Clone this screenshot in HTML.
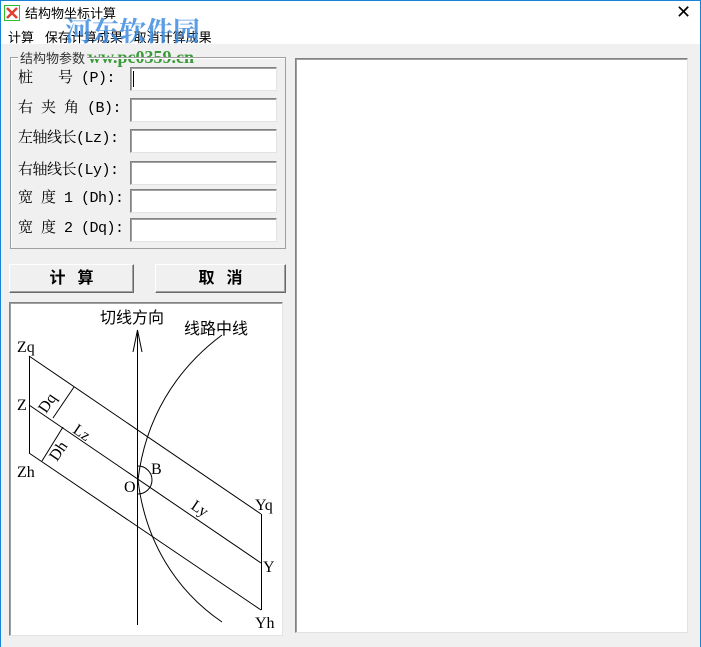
<!DOCTYPE html>
<html><head><meta charset="utf-8"><style>
*{margin:0;padding:0;box-sizing:border-box}
body{width:701px;height:647px;background:#f0f0f0;position:relative;overflow:hidden;font-family:"Liberation Sans","Noto Sans CJK SC",sans-serif;font-size:13px;color:#000}
.a{position:absolute}
.hdr{left:0;top:0;width:701px;height:44px;background:#fff}
.inp{position:absolute;left:130px;width:147px;height:24px;background:#fff;border:1px solid;border-color:#828282 #e3e3e3 #e3e3e3 #828282;box-shadow:inset 1px 1px 0 #a0a0a0}
.lab{position:absolute;left:18px;font-family:"Liberation Mono","Noto Serif CJK SC",monospace;font-size:15px;letter-spacing:-0.5px;white-space:pre;line-height:20px}
.btn{position:absolute;top:264px;height:29px;background:#f0f0f0;border:1px solid;border-color:#fff #696969 #696969 #fff;box-shadow:inset -1px -1px 0 #a0a0a0;text-align:center;line-height:27px;font-weight:bold;font-size:16px;letter-spacing:12px;padding-left:12px}
</style></head><body>
<div class="a hdr"></div>
<div class="a" style="left:0;top:0;width:701px;height:647px;border:1px solid #1883d7;border-bottom:none"></div>
<svg class="a" style="left:4px;top:5px" width="16" height="16"><rect x="0.5" y="0.5" width="15" height="15" fill="none" stroke="#2bbd2b"/><path d="M3 3L13 13M13 3L3 13" stroke="#e04030" stroke-width="2.5"/></svg>
<div class="a" style="left:25px;top:3px;font-size:13px">结构物坐标计算</div>
<div class="a" style="left:676px;top:2px;font-size:18px;font-weight:300">✕</div>
<div class="a" style="left:8px;top:27px;font-size:13px;color:#000;white-space:pre">计算   保存计算成果   取消计算成果</div>
<div class="a" style="left:65px;top:10px;font-size:27px;font-weight:bold;color:#3f8de0;opacity:.85;font-family:'Noto Serif CJK SC',serif">河东软件园</div>
<div class="a" style="left:75px;top:47px;font-size:18px;font-weight:bold;color:#3a9a3a;font-family:'Liberation Serif',serif">www.pc0359.cn</div>
<div class="a" style="left:10px;top:57px;width:276px;height:192px;border:1px solid #a0a0a0;box-shadow:1px 1px 0 #fff inset"></div>
<div class="a" style="left:18px;top:48px;background:#f0f0f0;padding:0 2px;font-size:13px;color:#333">结构物参数</div>
<div class="lab" style="top:69px">桩   号 (P):</div><div class="inp" style="top:67px"></div>
<div class="a" style="left:133px;top:71px;width:1px;height:16px;background:#000"></div>
<div class="lab" style="top:99px">右 夹 角 (B):</div><div class="inp" style="top:98px"></div>
<div class="lab" style="top:129px">左轴线长(Lz):</div><div class="inp" style="top:129px"></div>
<div class="lab" style="top:161px">右轴线长(Ly):</div><div class="inp" style="top:161px"></div>
<div class="lab" style="top:189px">宽 度 1 (Dh):</div><div class="inp" style="top:189px"></div>
<div class="lab" style="top:219px">宽 度 2 (Dq):</div><div class="inp" style="top:218px"></div>
<div class="btn" style="left:9px;width:125px">计算</div>
<div class="btn" style="left:155px;width:131px">取消</div>
<div class="a" style="left:295px;top:58px;width:393px;height:575px;background:#fff;border:1px solid;border-color:#828282 #e3e3e3 #e3e3e3 #828282;box-shadow:inset 1px 1px 0 #a0a0a0"></div>
<div class="a" style="left:9px;top:302px;width:274px;height:334px;background:#fff;border:1px solid;border-color:#828282 #e3e3e3 #e3e3e3 #828282;box-shadow:inset 1px 1px 0 #a0a0a0"></div>
<svg class="a" style="left:0;top:0" width="701" height="647" font-family="Liberation Serif,serif" font-size="16">
<g stroke="#000" stroke-width="1" fill="none">
<path d="M137.5 330V625"/>
<path d="M133 352L137.5 330L142 352M137.5 330V352"/>
<path d="M29.5 356V453M261.5 514V610"/>
<path d="M29 356L261 514M29 405L261 563M29 453L261 610"/>
<path d="M53 418L74 387M42 461L63 427"/>
<path d="M222 335C175 370 145 420 138 480C145 540 175 590 222 622"/>
<path d="M138 466A14 14 0 0 1 138 494"/>
</g>
<g font-family="Liberation Sans,Noto Sans CJK SC,sans-serif">
<text x="100" y="323">切线方向</text>
<text x="184" y="334">线路中线</text>
</g>
<text x="17" y="352">Zq</text>
<text x="17" y="410">Z</text>
<text x="17" y="477">Zh</text>
<text x="124" y="492">O</text>
<text x="151" y="474">B</text>
<text x="255" y="510">Yq</text>
<text x="263" y="572">Y</text>
<text x="255" y="628">Yh</text>
<text transform="translate(46 414) rotate(-56)">Dq</text>
<text transform="translate(57 462) rotate(-56)">Dh</text>
<text transform="translate(72 432) rotate(34)">Lz</text>
<text transform="translate(190 508) rotate(34)">Ly</text>
</svg>
</body></html>
